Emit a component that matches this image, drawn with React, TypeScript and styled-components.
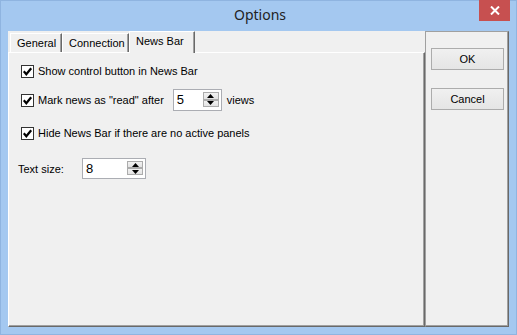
import React from "react";
import styled, { createGlobalStyle } from "styled-components";

const Global = createGlobalStyle`
  html, body { margin: 0; padding: 0; background: #a4c8f0; }
  body { width: 517px; height: 335px; overflow: hidden; }
  * { box-sizing: border-box; }
`;

const Window = styled.div`
  width: 517px;
  height: 335px;
  background: #a4c8f0;
  border: 1px solid #8fb4e0;
  display: flex;
  flex-direction: column;
  font-family: "Liberation Sans", Arial, sans-serif;
  font-size: 11px;
  color: #000;
`;

const TitleBar = styled.div`
  height: 30px;
  display: grid;
  grid-template-columns: 1fr auto 1fr;
  align-items: start;
`;

const Title = styled.div`
  grid-column: 2;
  font-family: "Noto Sans", "Open Sans", sans-serif;
  font-size: 14px;
  line-height: 28px;
  color: #222;
  padding-left: 3px;
`;

const CloseButton = styled.div`
  grid-column: 3;
  justify-self: end;
  margin-top: -1px;
  margin-right: 6px;
  width: 31px;
  height: 21px;
  background: #c75050;
  display: flex;
  align-items: center;
  justify-content: center;
`;

const Client = styled.div`
  flex: 1;
  display: flex;
  margin: 0 7px 7px 7px;
`;

const TabControl = styled.div`
  width: 417px;
  display: flex;
  flex-direction: column;
  background: #f0f0f0;
`;

const TabStrip = styled.div`
  height: 21px;
  display: flex;
  align-items: flex-end;
  padding-left: 2px;
`;

const Tab = styled.div<{ $active?: boolean; $w: number }>`
  width: ${(p) => p.$w}px;
  height: ${(p) => (p.$active ? 22 : 19)}px;
  margin-bottom: ${(p) => (p.$active ? -1 : 0)}px;
  position: relative;
  z-index: ${(p) => (p.$active ? 1 : 0)};
  background: #f0f0f0;
  border-left: 1px solid #fff;
  border-top: 1px solid #fff;
  border-right: 1px solid #696969;
  box-shadow: inset -1px 0 0 #a0a0a0;
  display: flex;
  align-items: ${(p) => (p.$active ? "flex-start" : "center")};
  padding-top: ${(p) => (p.$active ? 3 : 0)}px;
  padding-left: 6px;
  white-space: nowrap;
`;

const TabPage = styled.div`
  flex: 1;
  border-top: 1px solid #fff;
  border-left: 1px solid #fff;
  border-right: 1px solid #696969;
  border-bottom: 1px solid #696969;
  box-shadow: inset -1px -1px 0 #a0a0a0;
  display: flex;
  flex-direction: column;
  padding: 7px 0 0 9px;
`;

const Row = styled.div<{ $mt: number; $h: number; $indent?: number }>`
  margin-top: ${(p) => p.$mt}px;
  height: ${(p) => p.$h}px;
  padding-left: ${(p) => p.$indent ?? 0}px;
  display: flex;
  align-items: center;
  white-space: nowrap;
`;

const Box = styled.div`
  width: 13px;
  height: 13px;
  border: 1px solid #333;
  background: #fff;
  margin-right: 4px;
  display: flex;
  align-items: center;
  justify-content: center;
  flex: none;
`;

const Label = styled.span<{ $w?: number; $ml?: number }>`
  ${(p) => (p.$w ? `width: ${p.$w}px;` : "")}
  margin-left: ${(p) => p.$ml ?? 0}px;
`;

const Spin = styled.div<{ $w: number; $h: number; $ml: number }>`
  width: ${(p) => p.$w}px;
  height: ${(p) => p.$h}px;
  margin-left: ${(p) => p.$ml}px;
  border: 1px solid #abadb3;
  background: #fff;
  display: flex;
  align-items: stretch;
  padding: 2px 2px 3px 3px;
  flex: none;
`;

const SpinValue = styled.div`
  flex: 1;
  font-size: 13px;
  line-height: 15px;
`;

const SpinButtons = styled.div`
  width: 16px;
  display: flex;
  flex-direction: column;
`;

const SpinBtn = styled.div`
  flex: 1;
  border: 1px solid #acacac;
  background: linear-gradient(#f2f2f2, #e3e3e3);
  display: flex;
  align-items: center;
  justify-content: center;
`;

const SidePanel = styled.div`
  width: 84px;
  background: #f0f0f0;
  border-left: 1px solid #a0a0a0;
  border-top: 1px solid #a0a0a0;
  border-right: 1px solid #696969;
  border-bottom: 1px solid #696969;
  box-shadow: inset -1px -1px 0 #a0a0a0;
  display: flex;
  flex-direction: column;
  gap: 18px;
  padding: 16px 0 0 5px;
`;

const Button = styled.div`
  width: 73px;
  height: 22px;
  border: 1px solid #acacac;
  background: linear-gradient(#f0f0f0, #e5e5e5);
  display: flex;
  align-items: center;
  justify-content: center;
  font-size: 11px;
`;

const Check = () => (
  <svg width="11" height="11" viewBox="0 0 11 11">
    <path d="M1.8 5.3 L4.3 8.2 L9.2 2.2" fill="none" stroke="#000" strokeWidth="2.2" />
  </svg>
);

const Up = () => (
  <svg width="7" height="4" viewBox="0 0 7 4">
    <path d="M3.5 0 L7 4 L0 4 Z" fill="#000" />
  </svg>
);

const Down = () => (
  <svg width="7" height="4" viewBox="0 0 7 4">
    <path d="M0 0 L7 0 L3.5 4 Z" fill="#000" />
  </svg>
);

const SpinBox = ({ value, w, h, ml }: { value: string; w: number; h: number; ml: number }) => (
  <Spin $w={w} $h={h} $ml={ml}>
    <SpinValue>{value}</SpinValue>
    <SpinButtons>
      <SpinBtn><Up /></SpinBtn>
      <SpinBtn><Down /></SpinBtn>
    </SpinButtons>
  </Spin>
);

export default function App() {
  return (
    <>
      <Global />
      <Window>
        <TitleBar>
          <Title>Options</Title>
          <CloseButton>
            <svg width="10" height="9" viewBox="0 0 10 9">
              <path d="M1 0.5 L9 8.5 M9 0.5 L1 8.5" stroke="#fff" strokeWidth="2" />
            </svg>
          </CloseButton>
        </TitleBar>
        <Client>
          <TabControl>
            <TabStrip>
              <Tab $w={52}>General</Tab>
              <Tab $w={67}>Connection</Tab>
              <Tab $w={66} $active>News Bar</Tab>
            </TabStrip>
            <TabPage>
              <Row $mt={0} $h={22} $indent={3}>
                <Box><Check /></Box>
                <Label>Show control button in News Bar</Label>
              </Row>
              <Row $mt={7} $h={22} $indent={3}>
                <Box><Check /></Box>
                <Label>Mark news as "read" after</Label>
                <SpinBox value="5" w={49} h={22} ml={9} />
                <Label $ml={5}>views</Label>
              </Row>
              <Row $mt={11} $h={22} $indent={3}>
                <Box><Check /></Box>
                <Label>Hide News Bar if there are no active panels</Label>
              </Row>
              <Row $mt={14} $h={21}>
                <Label $w={64}>Text size:</Label>
                <SpinBox value="8" w={64} h={21} ml={0} />
              </Row>
            </TabPage>
          </TabControl>
          <SidePanel>
            <Button>OK</Button>
            <Button>Cancel</Button>
          </SidePanel>
        </Client>
      </Window>
    </>
  );
}
